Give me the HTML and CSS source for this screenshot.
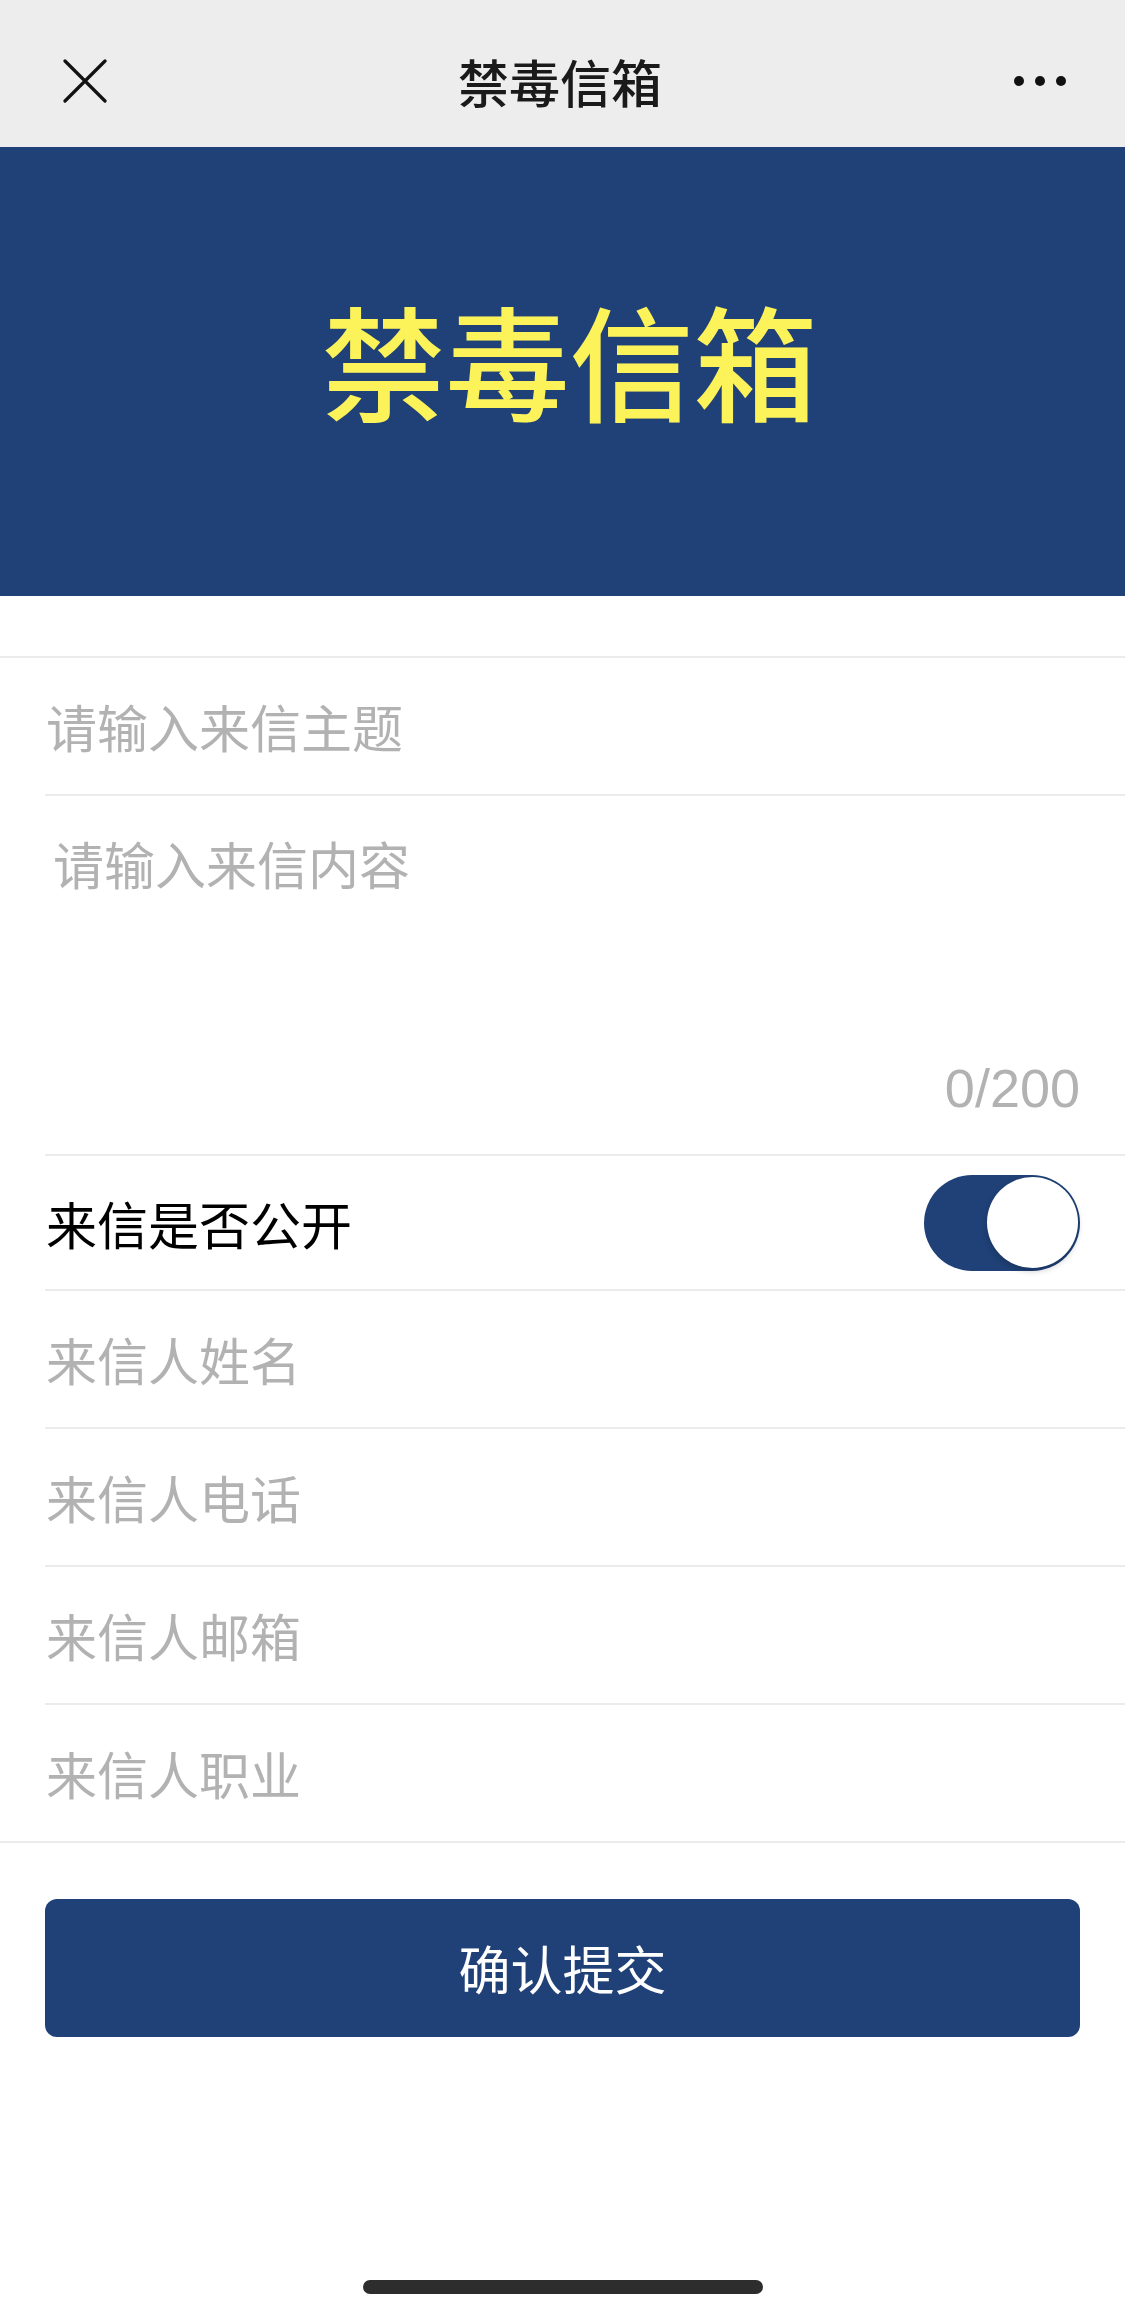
FILE: index.html
```html
<!DOCTYPE html>
<html lang="zh-CN">
<head>
<meta charset="utf-8">
<title>禁毒信箱</title>
<link rel="stylesheet" href="styles.css">
</head>
<body>
<div class="page">
  <header class="navbar">
    <span class="nav-close">
      <svg width="44" height="44" viewBox="0 0 44 44"><path d="M2 2 L42 42 M42 2 L2 42" stroke="#111" stroke-width="3.2" stroke-linecap="round" fill="none"/></svg>
    </span>
    <span class="nav-title">禁毒信箱</span>
    <span class="nav-more">
      <svg width="54" height="12" viewBox="0 0 54 12"><circle cx="6" cy="6" r="5" fill="#111"/><circle cx="27" cy="6" r="5" fill="#111"/><circle cx="48" cy="6" r="5" fill="#111"/></svg>
    </span>
  </header>

  <section class="banner">
    <h1 class="banner-title">禁毒信箱</h1>
  </section>

  <div class="spacer"></div>

  <form class="form">
    <div class="field">
      <input class="field-input" type="text" placeholder="请输入来信主题">
    </div>
    <div class="field field-area">
      <textarea class="field-textarea" placeholder="请输入来信内容"></textarea>
      <div class="counter">0/200</div>
    </div>
    <div class="field field-switch">
      <span class="switch-label">来信是否公开</span>
      <span class="switch"><span class="switch-knob"></span></span>
    </div>
    <div class="field">
      <input class="field-input" type="text" placeholder="来信人姓名">
    </div>
    <div class="field">
      <input class="field-input" type="text" placeholder="来信人电话">
    </div>
    <div class="field">
      <input class="field-input" type="text" placeholder="来信人邮箱">
    </div>
    <div class="field field-last">
      <input class="field-input" type="text" placeholder="来信人职业">
    </div>
  </form>

  <div class="actions">
    <button class="submit" type="button">确认提交</button>
  </div>

  <div class="home-bar"></div>
</div>
</body>
</html>
```
FILE: styles.css
```css
* {
  box-sizing: border-box;
}

html, body {
  margin: 0;
  padding: 0;
  background: #ffffff;
}

body {
  font-family: "Noto Sans CJK SC", "Noto Sans", sans-serif;
  color: #000;
}

.page {
  width: 1125px;
  min-height: 2298px;
  display: flex;
  flex-direction: column;
}

/* top navigation */
.navbar {
  height: 147px;
  background: #ededed;
  display: grid;
  grid-template-columns: 1fr auto 1fr;
  align-items: center;
  padding-top: 14px;
}

.nav-close {
  display: flex;
  justify-self: start;
  margin-left: 63px;
}

.nav-more {
  display: flex;
  justify-self: end;
  margin-right: 58px;
}

.nav-close svg,
.nav-more svg {
  display: block;
}

.nav-title {
  font-size: 51px;
  font-weight: 500;
  color: #1a1a1a;
  line-height: 60px;
  margin-right: 5px;
}

/* banner */
.banner {
  height: 449px;
  background: #1f4177;
  display: flex;
  align-items: center;
  justify-content: center;
  padding-bottom: 28px;
  padding-left: 14px;
}

.banner-title {
  margin: 0;
  font-size: 124px;
  font-weight: 500;
  color: #fcf25a;
  line-height: 140px;
}

.spacer {
  height: 60px;
}

/* form */
.form {
  border-top: 2px solid #ebebeb;
  border-bottom: 2px solid #ebebeb;
  display: flex;
  flex-direction: column;
  padding-left: 45px;
}

.field {
  height: 138px;
  border-bottom: 2px solid #ebebeb;
  display: flex;
  align-items: center;
  padding-right: 45px;
}

.field-last {
  border-bottom: none;
  height: 136px;
}

.field-input {
  width: 100%;
  border: none;
  outline: none;
  background: transparent;
  font-family: "Noto Sans CJK SC", "Noto Sans", sans-serif;
  font-size: 51px;
  line-height: 60px;
  padding: 0 0 0 1px;
  color: #000;
}

.field-input::placeholder,
.field-textarea::placeholder {
  color: #b2b2b2;
}

.field-area {
  height: 360px;
  flex-direction: column;
  align-items: stretch;
  padding-top: 37px;
  padding-bottom: 36px;
}

.field-textarea {
  flex: 1;
  border: none;
  outline: none;
  resize: none;
  background: transparent;
  font-family: "Noto Sans CJK SC", "Noto Sans", sans-serif;
  font-size: 51px;
  line-height: 60px;
  padding: 0 0 0 8px;
  margin: 0;
  color: #000;
}

.counter {
  font-family: "Liberation Sans", Arial, sans-serif;
  font-size: 54px;
  line-height: 60px;
  color: #b2b2b2;
  text-align: right;
}

.field-switch {
  height: 135px;
  justify-content: space-between;
}

.switch-label {
  font-size: 51px;
  line-height: 60px;
  color: #000;
  padding-left: 1px;
}

.switch {
  width: 156px;
  height: 96px;
  border-radius: 48px;
  background: #1f4177;
  display: flex;
  align-items: center;
  justify-content: flex-end;
  padding: 0 2px;
}

.switch-knob {
  width: 91px;
  height: 91px;
  border-radius: 50%;
  background: #fff;
  box-shadow: 0 3px 6px rgba(0, 0, 0, 0.2);
}

/* submit */
.actions {
  padding: 56px 45px 0 45px;
}

.submit {
  width: 100%;
  height: 138px;
  border: none;
  border-radius: 12px;
  background: #1f4177;
  color: #fff;
  font-family: "Noto Sans CJK SC", "Noto Sans", sans-serif;
  font-size: 52px;
  line-height: 60px;
  padding: 0;
}

.home-bar {
  margin: auto auto 4px auto;
  width: 400px;
  height: 14px;
  border-radius: 7px;
  background: #2d2d2d;
}
```
